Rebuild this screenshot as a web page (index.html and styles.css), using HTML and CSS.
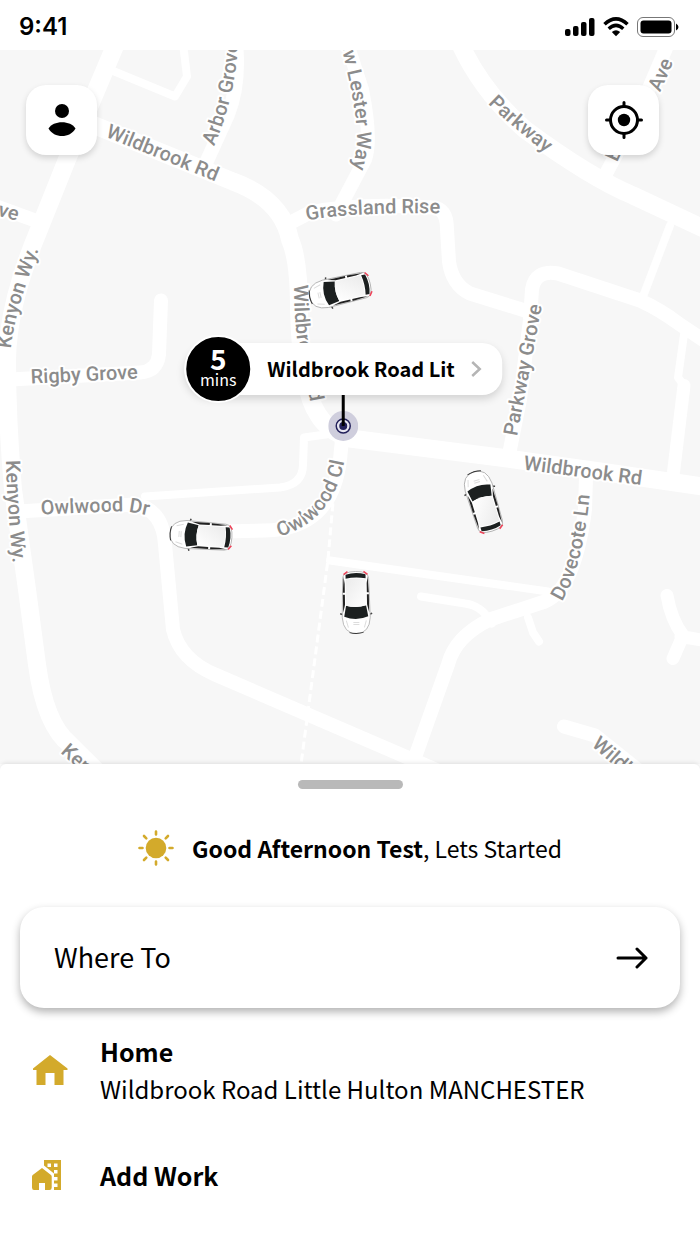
FILE: index.html
```
<!DOCTYPE html>
<html lang="en">
<head>
  <meta charset="UTF-8" />
  <meta name="viewport" content="width=device-width, initial-scale=1.0"/>
  <title>Book a ride</title>
  <link rel="stylesheet" href="styles.css">
</head>
<body>

<!-- Status bar -->
<header class="status-bar">
  <span class="time">9:41</span>
  <div class="status-icons">
    <svg width="30" height="20" viewBox="0 0 30 20">
      <rect x="0" y="12" width="5.500" height="7" rx="2"/>
      <rect x="8" y="9" width="5.500" height="10" rx="2"/>
      <rect x="16" y="5" width="5.500" height="14" rx="2"/>
      <rect x="24" y="1" width="5.500" height="18" rx="2"/>
    </svg>
    <svg width="26" height="20" viewBox="0 0 26 20">
      <path d="M1.5 7.2Q13-3.4 24.5 7.2" fill="none" stroke="#000" stroke-width="3.6"/>
      <path d="M5.7 11.7Q13 5 20.3 11.7" fill="none" stroke="#000" stroke-width="3.4"/>
      <path d="M8.8 15Q13 11.4 17.2 15L13 19.2Z"/>
    </svg>
    <svg width="42" height="20" viewBox="0 0 42 20">
      <rect x=".5" y=".5" width="37" height="19" rx="5.5" fill="#fff" stroke="#777"/>
      <rect x="3.5" y="3.5" width="31" height="13" rx="3"/>
      <path d="M39 6.500Q41.500 8 41.500 10Q41.500 12 39 13.500Z"/>
    </svg>
  </div>
</header>

<!-- Map -->
<main class="map">
  <svg class="map-canvas" viewBox="0 50 700 715" preserveAspectRatio="xMidYMid slice">
    <defs>
      <path id="kenyonTop" d="M11 349Q15 310 39 250"/>
      <path id="kenyonMid" d="M6 461Q7 510 14 575"/>
      <path id="kenyonLow" d="M60 753L120 806"/>
      <path id="wildTop" d="M105 137L240 192"/>
      <path id="wildMid" d="M294 285Q294 335 302 365T316 440"/>
      <path id="wildRight" d="M523 470L660 488"/>
      <path id="wildLow" d="M591 746L660 806"/>
      <path id="arbor" d="M214 147Q237 95 239 30"/>
      <path id="lester" d="M336 28Q357 105 357 138Q357 158 345 192"/>
      <path id="grass" d="M307 221Q350 212 460 214"/>
      <path id="parkway" d="M488 104Q508 125 570 172"/>
      <path id="aveTop" d="M660 93L682 43"/>
      <path id="aveLow" d="M617 163L631 133"/>
      <path id="aveLeft" d="M-3 216L40 228"/>
      <path id="rigby" d="M31 384L160 378"/>
      <path id="parkGrove" d="M517 437L545 290"/>
      <path id="owlDr" d="M41 515L115 512Q130 511 160 519"/>
      <path id="owlCl" d="M279 537Q342 520 347 440"/>
      <path id="dovecote" d="M562 602Q585 565 591 480"/>

      <linearGradient id="roof" x1="0" y1="0" x2="1" y2="1">
        <stop offset="0" stop-color="#fff"/>
        <stop offset="1" stop-color="#ebebeb"/>
      </linearGradient>
      <!-- car seen from above, bonnet up -->
      <g id="car">
        <path d="M-13-12L-16-11M13-12L16-11" stroke="#444" stroke-width="1.500"/>
        <path d="M-14-15Q-13-31 0-31Q13-31 14-15L13 24Q13 31 0 31Q-13 31-13 24Z" fill="#fff" stroke="#aaa" stroke-width=".8"/>
        <path d="M-7-30Q0-32 7-30" fill="none" stroke="#333" stroke-width="1"/>
        <path d="M-8-25L-10-18M8-25L10-18" stroke="#ddd" stroke-width="1"/>
        <path d="M-3-22H3M-3-20H3" stroke="#ddd" stroke-width="1"/>
        <path d="M-12-14Q0-19 12-14L10-3Q0-6-10-3Z" fill="#1c2020"/>
        <path d="M-13-10L-11-2L-11 8H-13ZM13-10L11-2L11 8H13ZM-13 10H-11V19L-12 26ZM13 10H11V19L12 26Z" fill="#222"/>
        <path d="M-10-3Q0-6 10-3L10 23Q0 25-10 23Z" fill="url(#roof)"/>
        <path d="M-10 24Q0 26 10 24L10 28Q0 31-10 28Z" fill="#1c2020"/>
        <path d="M-12 28L-8 31M12 28L8 31" stroke="#ee4258" stroke-width="1.500"/>
      </g>
    </defs>

    <g class="roads">
      <path class="w18" d="M116 44L67 160L37 235Q8 305 7 360Q7 420 13 490L27 590L37 665Q45 725 70 745L100 775"/>
      <path class="w18" d="M85 122L233 182Q282 200 290 240Q299 260 299 310Q301 390 318 415Q328 432 350 439L500 458L600 472L710 488"/>
      <path class="w18" d="M460 44Q482 92 525 130Q590 178 633 196L710 232"/>
      <path class="w14" d="M236 44Q240 85 228 115L203 170"/>
      <path class="w8" d="M112 71L175 97L187 77L183 44"/>
      <path class="w14" d="M347 44L362 90Q372 140 365 160L336 215"/>
      <path class="w14" d="M287 225L310 213Q360 203 432 208Q447 208 447 230L449 262Q452 285 470 294L525 311"/>
      <path class="w14" d="M508 460L520 400L530 320L532 290Q535 270 558 274L640 301Q660 310 680 325L710 345"/>
      <path class="w8" d="M643 297L670 226"/>
      <path class="w14" d="M668 44L640 110L605 176"/>
      <path class="w14" d="M-6 206L38 222"/>
      <path class="w14" d="M10 380L140 373Q157 372 159 355L161 301"/>
      <path class="w8" d="M684 335L678 378L684 386"/>
      <path class="w13" d="M684 386L672 485"/>
      <path class="w14" d="M18 512L135 505Q163 510 165 545L173 630Q180 660 215 675L440 772"/>
      <path class="w8" d="M145 497L280 488Q303 485 303 465L304 438L340 433"/>
      <path class="w14" d="M343 430L340 460Q332 530 265 531L225 532"/>
      <path class="w8" d="M330 561L548 592"/>
      <path class="w14" d="M586 478L585 510Q575 590 545 602L490 620Q455 637 448 665L416 755"/>
      <path class="w8" d="M421 597L465 604Q482 606 492 624"/>
      <path class="w8" d="M528 618L533 633L539 642"/>
      <path class="w13" d="M667 596Q671 620 683 636L673 659M681 637L710 642"/>
      <path class="w14" d="M564 727L595 736L650 780"/>
      <path class="footpath" d="M335 480L328 560L301 765"/>
    </g>

    <g class="labels">
      <text><textPath href="#kenyonTop">Kenyon Wy.</textPath></text>
      <text><textPath href="#kenyonMid">Kenyon Wy.</textPath></text>
      <text><textPath href="#kenyonLow">Kenyon</textPath></text>
      <text><textPath href="#wildTop">Wildbrook Rd</textPath></text>
      <text><textPath href="#wildMid">Wildbrook Rd</textPath></text>
      <text><textPath href="#wildRight">Wildbrook Rd</textPath></text>
      <text><textPath href="#wildLow">Wildbro</textPath></text>
      <text><textPath href="#arbor">Arbor Grove</textPath></text>
      <text><textPath href="#lester">New Lester Way</textPath></text>
      <text><textPath href="#grass">Grassland Rise</textPath></text>
      <text><textPath href="#parkway">Parkway</textPath></text>
      <text><textPath href="#aveTop">Ave</textPath></text>
      <text><textPath href="#aveLow">E</textPath></text>
      <text><textPath href="#aveLeft">ve</textPath></text>
      <text><textPath href="#rigby">Rigby Grove</textPath></text>
      <text><textPath href="#parkGrove">Parkway Grove</textPath></text>
      <text><textPath href="#owlDr">Owlwood Dr</textPath></text>
      <text><textPath href="#owlCl">Owlwood Cl</textPath></text>
      <text><textPath href="#dovecote">Dovecote Ln</textPath></text>
    </g>

    <use href="#car" transform="translate(340 291) rotate(-103)"/>
    <use href="#car" transform="translate(201 536) rotate(-86)"/>
    <use href="#car" transform="translate(356 603) rotate(179)"/>
    <use href="#car" transform="translate(483 502) rotate(-17)"/>
  </svg>

  <div class="map-buttons">
    <button class="icon-button" aria-label="Profile">
      <svg width="36" height="36" viewBox="0 0 36 36">
        <circle cx="18" cy="9" r="7"/>
        <path d="M4.500 26.500C9 18 27 18 31.500 26.500C26 36.500 10 36.500 4.500 26.500Z"/>
      </svg>
    </button>
    <button class="icon-button" aria-label="My location">
      <svg width="40" height="40" viewBox="0 0 40 40" fill="none" stroke="#000" stroke-width="3" stroke-linecap="round">
        <circle cx="20" cy="20" r="13.500"/>
        <circle cx="20" cy="20" r="6.200" fill="#000" stroke="none"/>
        <path d="M20 2.500V6.500M20 33.500V37.500M2.500 20H6.500M33.500 20H37.500"/>
      </svg>
    </button>
  </div>

  <!-- Pickup pin -->
  <div class="pickup">
    <button class="pickup-card">
      <span class="eta"><b>5</b>mins</span>
      <span class="pickup-name">Wildbrook Road Lit</span>
      <svg width="12" height="18" viewBox="0 0 12 18" fill="none" stroke="#b5b5b5" stroke-width="2.500">
        <path d="M2 2L9.500 9L2 16"/>
      </svg>
    </button>
    <svg class="pin" width="30" height="48" viewBox="0 0 30 48">
      <circle cx="15" cy="31" r="15" fill="#cfcedd"/>
      <circle cx="15" cy="31" r="7" fill="#e6e5f0" stroke="#23215b" stroke-width="1.500"/>
      <circle cx="15" cy="31" r="4" fill="#23215b"/>
      <path d="M15 0V31" stroke="#000" stroke-width="3"/>
    </svg>
  </div>
</main>

<!-- Bottom sheet -->
<section class="sheet">
  <div class="handle"></div>

  <div class="greeting">
    <svg width="36" height="36" viewBox="0 0 36 36" fill="#d3aa2b">
      <circle cx="18" cy="18" r="10.300"/>
      <path d="M18 1.500V4.500M18 31.500V34.500M1.500 18H4.500M31.500 18H34.500M6 6L8.300 8.300M27.700 27.700L30 30M30 6L27.700 8.300M6 30L8.300 27.700" stroke="#d3aa2b" stroke-width="2.600" stroke-linecap="round"/>
    </svg>
    <p><strong>Good Afternoon Test</strong>, Lets Started</p>
  </div>

  <button class="where-to">
    <span>Where To</span>
    <svg width="32" height="22" viewBox="0 0 32 22" fill="none" stroke="#000" stroke-width="3" stroke-linecap="round" stroke-linejoin="round">
      <path d="M2 11H30M21 2L30 11L21 20"/>
    </svg>
  </button>

  <nav class="places">
    <a class="place" href="#home">
      <svg width="36" height="32" viewBox="0 0 36 32" fill="#d3aa2b">
        <path d="M18 1L35.500 14.500V16H31.500V31H22.500V19H13.500V31H4.500V16H1V14.500Z"/>
      </svg>
      <span>
        <strong>Home</strong>
        <span class="address">Wildbrook Road Little Hulton MANCHESTER</span>
      </span>
    </a>
    <a class="place" href="#work">
      <svg width="36" height="32" viewBox="0 0 36 32" fill="#d3aa2b">
        <path fill-rule="evenodd" d="M12 1H29V31H22V28H25.500V24.500H22V21.500H25.500V18H22V14.500H25.500V11H22V14.500L12 6.500ZM15.500 4.500V8H19V4.500ZM22 4.500V8H25.500V4.500Z"/>
        <path d="M10 9L19 16Q19.700 16.500 19.700 17.500V28.500Q19.700 31 17.500 31H13V24H7V31H2Q0 31 0 28.500V17.500Q0 16.500 .7 16Z"/>
      </svg>
      <strong>Add Work</strong>
    </a>
  </nav>
</section>

</body>
</html>
```

FILE: styles.css
```
* {
  box-sizing: border-box;
}
body {
  font-family: "Noto Sans CJK JP", "Noto Sans", sans-serif;
  background: white;
  color: black;
  margin: 0;
  min-height: 100vh;
  display: flex;
  flex-direction: column;
}
button {
  font-family: inherit;
  color: inherit;
  background: white;
  border: none;
  padding: 0;
  cursor: pointer;
}
svg {
  display: block;
  flex: none;
}

/* status bar */
.status-bar {
  display: flex;
  justify-content: space-between;
  align-items: center;
  height: 50px;
  padding: 4px 21px 0 19px;
}
.time {
  font: 600 24px/28px Inter, sans-serif;
}
.status-icons {
  display: flex;
  gap: 8px;
}

/* map */
.map {
  position: relative;
  flex: 1;
  min-height: 480px;
  background: #f7f7f7;
  overflow: hidden;
}
.map-canvas {
  position: absolute;
  inset: 0;
  width: 100%;
  height: 100%;
}
.roads path {
  fill: none;
  stroke: white;
  stroke-linecap: round;
  stroke-linejoin: round;
}
.roads .w8 {
  stroke-width: 8px;
}
.roads .w13 {
  stroke-width: 13px;
}
.roads .w14 {
  stroke-width: 14px;
}
.roads .w18 {
  stroke-width: 18px;
}
.roads .footpath {
  stroke-width: 3px;
  stroke-linecap: butt;
  stroke-dasharray: 8 4;
}
.labels text {
  font: 500 20px Roboto, sans-serif;
  fill: #8c8c8c;
  stroke: white;
  stroke-width: 4px;
  stroke-linejoin: round;
  paint-order: stroke;
}
.map-buttons {
  position: relative;
  display: flex;
  justify-content: space-between;
  padding: 35px 41px 0 26px;
}
.icon-button {
  display: grid;
  place-items: center;
  width: 71px;
  height: 70px;
  border-radius: 20px;
  box-shadow: 0 3px 6px rgba(0, 0, 0, 0.15);
}

/* pickup pin */
.pickup {
  position: absolute;
  left: 49%;
  top: 284px;
  transform: translateX(-50%);
}
.pickup-card {
  display: flex;
  align-items: center;
  gap: 15px;
  height: 52px;
  margin: 9px 0 0;
  padding-right: 20px;
  border-radius: 34px 26px 26px 34px;
  box-shadow: 0 4px 8px rgba(0, 0, 0, 0.15);
}
.eta {
  display: flex;
  flex-direction: column;
  align-items: center;
  justify-content: center;
  width: 68px;
  height: 68px;
  padding-bottom: 4px;
  border: 2px solid white;
  border-radius: 50%;
  background: black;
  color: white;
  font-size: 16px;
  line-height: 18px;
}
.eta b {
  font-size: 28px;
  line-height: 24px;
}
.pickup-name {
  padding-bottom: 2px;
  font-size: 20px;
  font-weight: bold;
  white-space: nowrap;
}
.pin {
  margin: 0 auto;
}

/* bottom sheet */
.sheet {
  position: relative;
  padding: 16px 20px 50px;
  background: white;
  border-radius: 6px 6px 0 0;
  box-shadow: 0 -1px 4px rgba(0, 0, 0, 0.1);
}
.handle {
  width: 105px;
  height: 9px;
  margin: 0 auto;
  border-radius: 5px;
  background: #b9b9b9;
}
.greeting {
  display: flex;
  align-items: center;
  justify-content: center;
  gap: 18px;
  height: 118px;
  font-size: 23px;
}
.greeting p {
  margin: 0;
}
.where-to {
  display: flex;
  align-items: center;
  justify-content: space-between;
  width: 100%;
  height: 101px;
  padding: 0 32px 0 34px;
  border-radius: 24px;
  box-shadow: 0 4px 8px rgba(0, 0, 0, 0.3);
  font-size: 27px;
}
.where-to span {
  padding-bottom: 2px;
}
.places {
  display: flex;
  flex-direction: column;
  gap: 48px;
  padding: 24px 12px 0;
}
.place {
  display: flex;
  align-items: center;
  gap: 32px;
  color: black;
  font-size: 24px;
  line-height: 38px;
  text-decoration: none;
}
.place strong,
.address {
  display: block;
}
.place strong {
  font-size: 25px;
}
```
